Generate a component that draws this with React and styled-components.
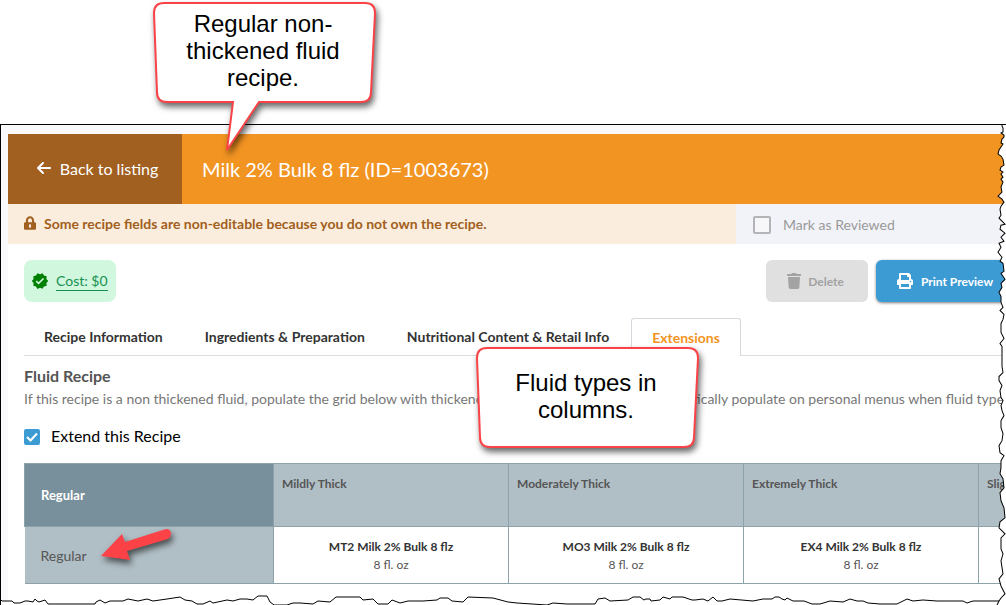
import React from 'react';
import styled, { createGlobalStyle } from 'styled-components';
import { FaArrowLeft } from 'react-icons/fa6';
import { FaTrash, FaPrint } from 'react-icons/fa';
import { MdVerified } from 'react-icons/md';

const GlobalStyle = createGlobalStyle`
  *, *::before, *::after { box-sizing: border-box; }
  body {
    margin: 0;
    background: #fff;
    color: #333;
    font-family: Lato, "Liberation Sans", sans-serif;
    font-size: 14px;
    overflow: hidden;
  }
`;

const Page = styled.main`
  position: relative;
  padding-top: 124px;
`;

const Frame = styled.div`
  position: relative;
  overflow: hidden;
  padding: 9px 0 0 7px;
  border-top: 1px solid #000;
  border-left: 1px solid #000;
  background: #f9f9fb;
`;

const Sheet = styled.div`
  margin-right: -24px;
  background: #fff;
`;

const Header = styled.header`
  display: flex;
  height: 70px;
  background: #f29422;
  color: #fff;
`;

const BackLink = styled.a`
  display: flex;
  align-items: center;
  justify-content: center;
  gap: 8px;
  width: 174px;
  padding: 0 0 2px 4px;
  background: #a15f20;
  color: #fff;
  font-size: 16px;
  text-decoration: none;
`;

const Title = styled.h1`
  margin: 0;
  padding: 0 20px;
  font-size: 20px;
  font-weight: 400;
  line-height: 70px;
`;

const StatusBar = styled.div`
  display: flex;
  height: 40px;
`;

const Notice = styled.div`
  display: flex;
  flex: 1;
  align-items: center;
  gap: 8px;
  padding: 0 16px 2px;
  background: #fbeddd;
  color: #a15f20;
  font-weight: 700;
`;

const ReviewPanel = styled.div`
  display: flex;
  align-items: center;
  width: 294px;
  padding: 2px 17px 0;
  background: #f2f3f8;
`;

const CheckLabel = styled.label`
  display: flex;
  align-items: center;
  gap: ${(p) => p.$gap};
  color: ${(p) => p.$color};
  font-size: ${(p) => p.$size};
`;

const CheckText = styled.span`
  padding-bottom: 2px;
`;

const CheckBoxWrap = styled.span`
  position: relative;
  display: flex;
`;

const CheckBox = styled.input`
  appearance: none;
  width: ${(p) => p.$size};
  height: ${(p) => p.$size};
  margin: 0;
  border: 2px solid #b3b4b8;
  border-radius: 2px;
  background: #f7f7fa;
  &:checked {
    border-color: #3d9bd3;
    background: #3d9bd3;
  }
`;

const CheckMark = styled.svg`
  position: absolute;
  inset: 0;
  width: 100%;
  height: 100%;
  pointer-events: none;
`;

const Body = styled.section`
  padding: 16px 16px 21px;
`;

const Toolbar = styled.div`
  display: flex;
  justify-content: space-between;
  height: 42px;
`;

const CostBadge = styled.div`
  display: flex;
  align-items: center;
  gap: 7px;
  padding: 0 8px 0 7px;
  border-radius: 8px;
  background: #d1f7df;
  color: #008000;
`;

const CostLink = styled.a`
  border-bottom: 1px solid #16914f;
  color: #16914f;
  font-size: 14px;
  line-height: 18px;
  text-decoration: none;
`;

const Actions = styled.div`
  display: flex;
  gap: 8px;
`;

const ActionButton = styled.button`
  display: flex;
  align-items: center;
  justify-content: center;
  gap: ${(p) => (p.$primary ? '8px' : '6px')};
  width: ${(p) => (p.$primary ? '138px' : '102px')};
  padding: ${(p) => (p.$primary ? '0' : '0 4px 0 0')};
  border: 0;
  border-radius: 6px;
  background: ${(p) => (p.$primary ? '#3d9bd3' : '#e0e0e0')};
  box-shadow: ${(p) => (p.$primary ? '0 1px 3px rgba(0, 0, 0, 0.5)' : 'none')};
  color: ${(p) => (p.$primary ? '#fff' : '#a3a3a3')};
  font-family: inherit;
  font-size: 12px;
  font-weight: 700;
`;

const TabBar = styled.div`
  display: flex;
  align-items: flex-end;
  gap: 2px;
  margin-top: 16px;
  border-bottom: 1px solid #dcdfe2;
`;

const Tab = styled.button`
  height: 38px;
  margin-bottom: -1px;
  padding: ${(p) => (p.$active ? '0 20px' : '0 20px 2px')};
  border: 1px solid ${(p) => (p.$active ? '#d5d9de' : 'transparent')};
  border-width: 1px ${(p) => (p.$active ? '1px' : '0')} 0;
  border-radius: 3px 3px 0 0;
  background: ${(p) => (p.$active ? '#fff' : 'transparent')};
  color: ${(p) => (p.$active ? '#f29422' : '#333')};
  font-family: inherit;
  font-size: 14px;
  font-weight: 700;
  white-space: nowrap;
`;

const SectionTitle = styled.h2`
  margin: 8px 0 0;
  color: #555;
  font-size: 16px;
  font-weight: 700;
  line-height: 24px;
`;

const Hint = styled.p`
  margin: 0;
  color: #777;
  line-height: 22px;
  white-space: nowrap;
`;

const ExtendRow = styled.div`
  display: flex;
  align-items: center;
  height: 53px;
`;

const GridTable = styled.table`
  width: 1190px;
  border-collapse: collapse;
  table-layout: fixed;
`;

const HeadCell = styled.th`
  width: 235px;
  height: 63px;
  padding: 10px 8px;
  border: 1px solid #8ea2aa;
  background: #b0bec5;
  color: #555;
  font-size: 12px;
  line-height: 20px;
  text-align: left;
  vertical-align: top;
`;

const CornerCell = styled(HeadCell)`
  width: 249px;
  padding: 0 16px;
  background: #78909c;
  color: #fff;
  font-size: 13px;
  vertical-align: middle;
`;

const RowHead = styled.th`
  padding: 0 16px;
  border-right: 1px solid #8ea2aa;
  border-bottom: 1px solid #8ea2aa;
  background: #b0bec5;
  color: #555;
  font-size: 14px;
  font-weight: 400;
  text-align: left;
`;

const FluidCell = styled.td`
  height: 57px;
  padding: 2px 8px 0;
  border: 1px solid #8ea2aa;
  color: #555;
  font-size: 12px;
  line-height: 18px;
  text-align: center;
`;

const FluidName = styled.strong`
  display: block;
  color: #333;
`;

const TornRight = styled.svg`
  position: absolute;
  top: -1px;
  right: 0;
  width: 16px;
  height: calc(100% + 1px);
`;

const TornBottom = styled.svg`
  position: absolute;
  bottom: 0;
  left: -1px;
  width: calc(100% + 1px);
  height: 15px;
`;

const Callout = styled.aside`
  position: absolute;
  top: ${(p) => p.$top};
  left: ${(p) => p.$left};
  display: flex;
  align-items: center;
  justify-content: center;
  width: 226px;
  height: 104px;
  padding: 0 2px 3px 0;
  color: #000;
  font-family: "Liberation Sans", Arial, sans-serif;
  font-size: 24px;
  line-height: 27px;
  text-align: center;
`;

const CalloutText = styled.p`
  position: relative;
  width: 176px;
  margin: 0;
`;

const Drawing = styled.svg`
  position: absolute;
  top: 0;
  left: 0;
  overflow: visible;
  filter: drop-shadow(2px 4px 3px rgba(0, 0, 0, 0.6));
`;

const Pointer = styled(Drawing)`
  top: 524px;
  left: 96px;
`;

const fluids = [
  { type: 'Mildly Thick', name: 'MT2 Milk 2% Bulk 8 flz', size: '8 fl. oz' },
  { type: 'Moderately Thick', name: 'MO3 Milk 2% Bulk 8 flz', size: '8 fl. oz' },
  { type: 'Extremely Thick', name: 'EX4 Milk 2% Bulk 8 flz', size: '8 fl. oz' },
  { type: 'Slightly Thick', name: '', size: '' },
];

const tabs = ['Recipe Information', 'Ingredients & Preparation', 'Nutritional Content & Retail Info', 'Extensions'];

const rightEdge =
  'M12 0V2L13 4L13 8L11 9L14 11L14 13L12 15L11 19L13 20L11 23L9 26L8 30L11 32L13 35L14 41L11 43L10 46L13 48L11 50L13 53L11 55L13 58L11 63L12 68L8 72L12 75L14 78L11 82L10 85L11 91L9 94L12 97L15 100L11 101L10 105L15 109L11 113L14 117L9 119L11 123L8 128L12 133L10 137L13 139L14 147L11 149L15 155L11 159L12 163L9 168L11 172L11 178L13 183L10 186L14 190L13 195L11 199L11 208L14 214L10 219L12 222V242L13 248L9 252L9 256L12 261L10 266L11 273L13 276L11 281L12 286L14 291L11 296V303L13 309L12 316L9 321L10 328L14 331L11 336L11 343L10 349L13 354L14 363L10 368L11 376L14 383L15 393L10 397L9 403L15 409L11 413V424L13 429L11 436L13 449L9 454L11 461L15 469L11 473L9 476L7 480';

const bottomEdge =
  'M0 9L2 11H12L14 13H20L25 11H28L33 12L35 9L37 11L39 12L45 10L48 14L57 14H95L96 12L100 10L105 13L110 11L123 11L128 9L138 11L147 9L153 11L167 9L180 7L185 10L192 11L197 14H203L210 11L213 13L227 10L233 11L240 9L247 9L253 10L258 6H267L270 12L274 15H287L293 13L300 13L313 14L318 11L330 12L336 7H360L363 10L373 9L378 14H388L392 10L400 13L408 11H423L437 10L440 8H448L452 11L463 12L468 7L493 8L508 12L517 13L547 15L553 13L567 14H595L598 9L605 8L610 11L628 10L633 7L640 7L644 10L646 9H650L651 11L660 10L663 7L670 9L672 7H683L686 8L692 10H695L703 9L708 11L713 7L717 11H722L730 9L753 11L763 9L772 9L775 7H779L782 9L785 10L787 8L793 11H804L812 14H820L830 11L843 12L850 9L857 11H863L868 13L880 14H897L907 9L913 11L923 10L937 11H963L967 13L973 11H1000L1006 6';

function LockIcon() {
  return (
    <svg width="12" height="14" viewBox="0 0 448 512" fill="currentColor" fillRule="evenodd" aria-hidden="true">
      <path d="M400 224h-24v-72C376 68.2 307.8 0 224 0S72 68.2 72 152v72H48c-26.5 0-48 21.5-48 48v192c0 26.5 21.500 48 48 48h352c26.5 0 48-21.5 48-48V272c0-26.5-21.5-48-48-48zm-104 0H152v-72c0-39.7 32.300-72 72-72s72 32.300 72 72v72zM264 392c0 22.1-17.9 40-40 40s-40-17.9-40-40v-48c0-22.1 17.900-40 40-40s40 17.900 40 40v48z" />
    </svg>
  );
}

function App() {
  return (
    <Page>
      <GlobalStyle />
      <Frame>
        <Sheet>
          <Header>
            <BackLink href="#listing">
              <FaArrowLeft size={16} aria-hidden="true" />
              Back to listing
            </BackLink>
            <Title>Milk 2% Bulk 8 flz (ID=1003673)</Title>
          </Header>
          <StatusBar>
            <Notice>
              <LockIcon />
              Some recipe fields are non-editable because you do not own the recipe.
            </Notice>
            <ReviewPanel>
              <CheckLabel $gap="12px" $color="#999" $size="14px">
                <CheckBox type="checkbox" $size="18px" disabled />
                <CheckText>Mark as Reviewed</CheckText>
              </CheckLabel>
            </ReviewPanel>
          </StatusBar>
          <Body>
            <Toolbar>
              <CostBadge>
                <MdVerified size={18} aria-hidden="true" />
                <CostLink href="#cost">Cost: $0</CostLink>
              </CostBadge>
              <Actions>
                <ActionButton type="button" disabled>
                  <FaTrash size={16} aria-hidden="true" />
                  Delete
                </ActionButton>
                <ActionButton type="button" $primary>
                  <FaPrint size={16} aria-hidden="true" />
                  Print Preview
                </ActionButton>
              </Actions>
            </Toolbar>
            <TabBar role="tablist">
              {tabs.map((tab) => (
                <Tab key={tab} type="button" role="tab" aria-selected={tab === 'Extensions'} $active={tab === 'Extensions'}>
                  {tab}
                </Tab>
              ))}
            </TabBar>
            <SectionTitle>Fluid Recipe</SectionTitle>
            <Hint>
              If this recipe is a non thickened fluid, populate the grid below with thickened fluids. These recipes will
              automatically populate on personal menus when fluid types
            </Hint>
            <ExtendRow>
              <CheckLabel $gap="11px" $color="#000" $size="16px">
                <CheckBoxWrap>
                  <CheckBox type="checkbox" $size="16px" defaultChecked />
                  <CheckMark viewBox="0 0 16 16" fill="none" stroke="#fff" strokeWidth="2" aria-hidden="true">
                    <path d="M3 8l3.500 3.500L13 4.500" />
                  </CheckMark>
                </CheckBoxWrap>
                <CheckText>Extend this Recipe</CheckText>
              </CheckLabel>
            </ExtendRow>
            <GridTable>
              <thead>
                <tr>
                  <CornerCell scope="col">Regular</CornerCell>
                  {fluids.map((f) => (
                    <HeadCell key={f.type} scope="col">{f.type}</HeadCell>
                  ))}
                </tr>
              </thead>
              <tbody>
                <tr>
                  <RowHead scope="row">Regular</RowHead>
                  {fluids.map((f) => (
                    <FluidCell key={f.type}>
                      <FluidName>{f.name}</FluidName>
                      {f.size}
                    </FluidCell>
                  ))}
                </tr>
              </tbody>
            </GridTable>
          </Body>
        </Sheet>
        <TornBottom viewBox="0 0 1006 15" preserveAspectRatio="none" aria-hidden="true">
          <path d={`${bottomEdge}V15H0z`} fill="#fff" />
          <path d={bottomEdge} fill="none" stroke="#000" />
        </TornBottom>
        <TornRight viewBox="0 0 16 480" preserveAspectRatio="none" aria-hidden="true">
          <path d={`${rightEdge}L16 480V0z`} fill="#fff" />
          <path d={rightEdge} fill="none" stroke="#000" />
        </TornRight>
      </Frame>
      <Callout $top="0" $left="151px">
        <Drawing width="226" height="156" viewBox="0 0 226 156" aria-hidden="true">
          <path
            d="M13 3H214Q224 3 224 13L220 92Q220 102 210 102H108L76 150L82 102H16Q6 102 6 92L3 13Q3 3 13 3z"
            fill="#fff"
            stroke="#fb4347"
            strokeWidth="2"
          />
        </Drawing>
        <CalloutText>Regular non-thickened fluid recipe.</CalloutText>
      </Callout>
      <Callout $top="345px" $left="474px">
        <Drawing width="226" height="104" viewBox="0 0 226 104" aria-hidden="true">
          <path
            d="M13 3H214Q224 3 224 13L220 92Q220 102 210 102H16Q6 102 6 92L3 13Q3 3 13 3z"
            fill="#fff"
            stroke="#fb4347"
            strokeWidth="2"
          />
        </Drawing>
        <CalloutText>Fluid types in columns.</CalloutText>
      </Callout>
      <Pointer width="80" height="44" viewBox="0 0 80 44" aria-hidden="true">
        <path d="M5 32L26 10L29 18L70 5Q75 5 75 10Q75 13 72 15L31 27L34 36z" fill="#fb4347" />
      </Pointer>
    </Page>
  );
}

export default App;
